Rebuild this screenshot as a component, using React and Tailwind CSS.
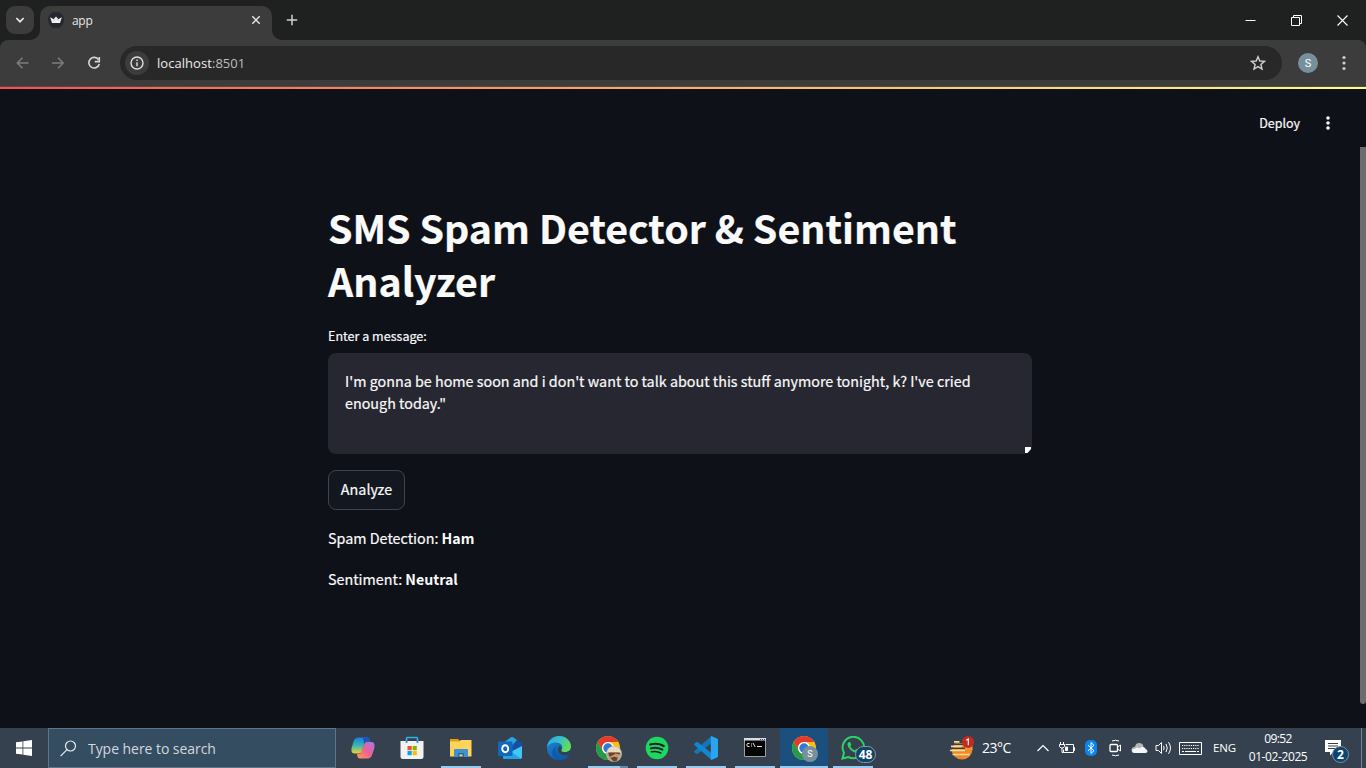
import React from "react";

const SANS = "font-['Noto_Sans_CJK_JP',sans-serif]";
const UI = "font-['Open_Sans','Noto_Sans',sans-serif]";

function CrownIcon() {
  return (
    <svg width="16" height="16" viewBox="0 0 16 16">
      <circle cx="8" cy="8" r="8" fill="#262730" />
      <path d="M2.2 5.2 5.6 7.2 8 4.6 10.4 7.2 13.8 5.2 12 11H4z" fill="#f4f4f4" />
      <path d="M4.5 8.4 8 7.4l3.5 1" stroke="#b9bac0" strokeWidth=".6" fill="none" />
    </svg>
  );
}

function TabStrip() {
  return (
    <div className="flex h-10 shrink-0 bg-[#1f2120]">
      <div className="flex w-[34px] shrink-0 items-start pt-[6px] pl-[6px]">
        <div className="flex h-7 w-7 shrink-0 items-center justify-center rounded-[9px] bg-[#3c3c3c]">
          <svg width="10" height="8" viewBox="0 0 10 8">
            <path d="M1.3 2 5 5.7 8.7 2" stroke="#e6e6e6" strokeWidth="1.7" fill="none" />
          </svg>
        </div>
      </div>
      <div className="flex w-[6px] items-end">
        <svg className="-ml-[4px] shrink-0" width="10" height="10" viewBox="0 0 10 10">
          <path d="M10 0v10H0A10 10 0 0 0 10 0z" fill="#3c3c3c" />
        </svg>
      </div>
      <div className="mt-[6px] flex h-[34px] w-[232px] items-center rounded-t-[10px] bg-[#3c3c3c] pr-[11px] pb-[6px] pl-2">
        <CrownIcon />
        <span className={`${UI} ml-2 flex-1 pt-[2px] text-[12px] leading-4 tracking-[-0.3px] text-[#e8e8e8]`}>app</span>
        <svg width="10" height="10" viewBox="0 0 10 10">
          <path d="m1.3 1.3 7.4 7.4M8.7 1.3 1.3 8.7" stroke="#e3e3e3" strokeWidth="1.5" />
        </svg>
      </div>
      <div className="flex w-[14px] items-end">
        <svg width="10" height="10" viewBox="0 0 10 10">
          <path d="M0 0v10h10A10 10 0 0 1 0 0z" fill="#3c3c3c" />
        </svg>
      </div>
      <svg className="mt-[14px]" width="12" height="12" viewBox="0 0 12 12">
        <path d="M6 .8v10.4M.8 6h10.4" stroke="#cfcfcf" strokeWidth="1.5" />
      </svg>
      <div className="flex-1" />
      <div className="flex items-center gap-[35px] pr-[18px]">
        <svg width="11" height="11" viewBox="0 0 11 11">
          <path d="M.5 5.5h10" stroke="#fff" />
        </svg>
        <svg width="11" height="11" viewBox="0 0 11 11" fill="none" stroke="#fff">
          <path d="M.5 2.5h8v8h-8zM2.5 2.5v-2h8v8h-2" />
        </svg>
        <svg width="11" height="11" viewBox="0 0 11 11">
          <path d="m.5.5 10 10M10.5.5l-10 10" stroke="#fff" strokeWidth="1.1" />
        </svg>
      </div>
    </div>
  );
}

function Toolbar() {
  return (
    <div className="shrink-0 bg-[#1f2120]">
      <div className="flex h-[47px] items-start rounded-t-[8px] border-b border-[#4b4b4b] bg-[#3c3c3c] pt-[6px]">
        <div className="flex h-[34px] w-[120px] shrink-0 items-center gap-[23px] pl-[16px]">
          <svg width="13" height="12" viewBox="0 0 13 12" fill="none" stroke="#7d7d7d" strokeWidth="1.5">
            <path d="M12.500 6H1.500M6.500.8 1.300 6l5.200 5.200" />
          </svg>
          <svg width="13" height="12" viewBox="0 0 13 12" fill="none" stroke="#7d7d7d" strokeWidth="1.5">
            <path d="M0 6h11M6 .8 11.2 6 6 11.2" />
          </svg>
          <svg className="-ml-px" width="14" height="14" viewBox="0 0 14 14" fill="none" stroke="#d6d6d6" strokeWidth="1.6">
            <path d="M11.6 3.8A5.3 5.3 0 1 0 12.3 8" />
            <path d="M12.3 1v4.6H7.8" />
          </svg>
        </div>
        <div className="flex h-[34px] w-[1162px] shrink-0 items-center rounded-full bg-[#282828] pr-[16px] pl-[5px]">
          <div className="flex h-6 w-6 items-center justify-center rounded-full bg-[#3c3c3c]">
            <svg width="14" height="14" viewBox="0 0 14 14">
              <circle cx="7" cy="7" r="6" fill="none" stroke="#dedede" strokeWidth="1.4" />
              <path d="M7 6.2v4M7 3.5v1.4" stroke="#dedede" strokeWidth="1.4" />
            </svg>
          </div>
          <span className={`${UI} ml-2 flex-1 text-[13px] leading-5 tracking-[0.05px] text-[#bdbdbd]`}>
            <span className="text-[#ececec]">localhost</span>:8501
          </span>
          <svg width="16" height="16" viewBox="0 0 16 16">
            <path d="m8 1.7 1.8 4.3 4.7.4-3.6 3.1 1.1 4.6L8 11.6l-4 2.5 1.1-4.6L1.5 6.4l4.7-.4z" fill="none" stroke="#cfcfcf" strokeWidth="1.4" />
          </svg>
        </div>
        <div className="flex h-[34px] flex-1 items-center pl-4">
          <div className="flex h-5 w-5 items-center justify-center rounded-full bg-[#78909c] font-['Roboto',sans-serif] text-[11px] leading-none text-white">S</div>
          <svg className="ml-[24px]" width="4" height="16" viewBox="0 0 4 16" fill="#cfcfcf">
            <circle cx="2" cy="2.5" r="1.6" />
            <circle cx="2" cy="8" r="1.6" />
            <circle cx="2" cy="13.5" r="1.6" />
          </svg>
        </div>
      </div>
      <div className="h-[2px] bg-linear-to-r from-[#ff4b4b] to-[#fffd80]" />
    </div>
  );
}

function StreamlitPage() {
  return (
    <div className={`${SANS} flex min-h-0 flex-1 flex-col bg-[#0e1117] text-[#fafafa] [-webkit-text-stroke:0.2px]`}>
      <header className="flex h-[58px] shrink-0 items-center justify-end pt-[10px] pr-[36px]">
        <span className="text-[12.5px] leading-5">Deploy</span>
        <svg className="ml-[26px]" width="4" height="14" viewBox="0 0 4 14" fill="#fafafa">
          <circle cx="2" cy="2" r="1.8" />
          <circle cx="2" cy="7" r="1.8" />
          <circle cx="2" cy="12" r="1.8" />
        </svg>
      </header>
      <div className="flex min-h-0 flex-1">
        <main className="ml-[328px] w-[704px] pt-[53px]">
          <h1 className="text-[39.34px] leading-[53px] font-bold">
            SMS Spam Detector &amp; Sentiment Analyzer
          </h1>
          <p className="mt-[20px] text-[12.55px] leading-[20px]">Enter a message:</p>
          <div className="mt-[7px] flex h-[101px] rounded-lg bg-[#262730] pt-[17px] pl-[17px]">
            <p className="mr-[10px] flex-1 text-[14.33px] leading-[22.4px]">
              I'm gonna be home soon and i don't want to talk about this stuff anymore tonight, k? I've cried enough today."
            </p>
            <svg className="mr-[1px] mb-[1px] shrink-0 self-end" width="6" height="6" viewBox="0 0 6 6">
              <path d="M0 0h6v2L2.500 6H0z" fill="#fff" />
            </svg>
          </div>
          <button className="mt-4 flex h-10 w-[77px] items-center justify-center rounded-lg border border-[#41444c] bg-[#131720] pb-[2px] text-[14.33px] leading-6">
            Analyze
          </button>
          <p className="mt-[15px] text-[14.33px] leading-[26px]">
            Spam Detection: <b className="text-[14.2px] font-bold [-webkit-text-stroke:0px]">Ham</b>
          </p>
          <p className="mt-[15px] text-[14.33px] leading-[26px]">
            Sentiment: <b className="text-[14.2px] font-bold [-webkit-text-stroke:0px]">Neutral</b>
          </p>
        </main>
        <div className="ml-auto h-[557px] w-[6px] rounded-b-[3px] bg-[#6b6c70]" />
      </div>
    </div>
  );
}

function Copilot() {
  return (
    <svg width="24" height="24" viewBox="0 0 24 24">
      <defs>
        <linearGradient id="cpa" x1="0" y1="0" x2="0" y2="1">
          <stop offset="0" stopColor="#1b7fe0" />
          <stop offset=".5" stopColor="#37b8b0" />
          <stop offset="1" stopColor="#f5cf2c" />
        </linearGradient>
        <linearGradient id="cpb" x1="1" y1="0" x2="0" y2="1">
          <stop offset="0" stopColor="#a779ee" />
          <stop offset=".5" stopColor="#ee6092" />
          <stop offset="1" stopColor="#ff9d55" />
        </linearGradient>
      </defs>
      <path d="M7.500 1.500h8.500c2 0 2.600 2 3.200 4h-3c-2 0-2.500 1-3 3l-2 6c-.6 2-1.500 3-3.500 3H3.500c-3 0-3.500-3-2.800-6l2-6.500C3.500 3 5 1.500 7.500 1.500z" fill="url(#cpa)" />
      <path d="M16.500 22.500H9c-2 0-2.500-1.500-3-4.500h1.500c2 0 2.800-1.200 3.300-3l2-6c.6-2 1.500-3 3.500-3H20.500c3 0 3.500 3 2.800 6l-2 6.500c-.8 2.700-2.300 4-4.800 4z" fill="url(#cpb)" />
      <path d="M12 1.500h4c2 0 2.600 2 3.200 4h-3c-2 0-2.500 1-3 3z" fill="#1854c7" />
    </svg>
  );
}

function Store() {
  return (
    <svg width="24" height="24" viewBox="0 0 24 24">
      <path d="M6.500 6V2.500q0-1 1-1h9q1 0 1 1V6" fill="none" stroke="#2fb0e6" strokeWidth="1.700" />
      <path d="M.5 5h23v15.500q0 2.500-2.500 2.500H3Q.5 23 .5 20.500z" fill="#f2f2f2" />
      <path d="M5.700 5h1.700v1.700H5.700zm10.900 0h1.700v1.700h-1.700z" fill="#1476b8" />
      <path d="M7.500 10h4.200v4.200H7.500z" fill="#f25022" />
      <path d="M12.600 10h4.200v4.200h-4.200z" fill="#7fba00" />
      <path d="M7.500 15h4.200v4.200H7.500z" fill="#00a4ef" />
      <path d="M12.600 15h4.200v4.200h-4.200z" fill="#ffb900" />
    </svg>
  );
}

function Explorer() {
  return (
    <svg width="24" height="24" viewBox="0 0 24 24">
      <path d="M1 3h8l2 2h11v4H1z" fill="#e0a008" />
      <path d="M1 5.500h9L12 4h10.500v16.500H1z" fill="#ffd35c" />
      <path d="M5 21v-7q0-1 1-1h12q1 0 1 1v7h-4v-4H9v4z" fill="#3f92d2" />
      <path d="M9 17h6v4h-1.500v-2.500h-3V21H9z" fill="#1d6eb0" />
    </svg>
  );
}

function Outlook() {
  return (
    <svg width="24" height="24" viewBox="0 0 24 24">
      <path d="M3 8.500 13 1.200q1-.6 2 0L24 7.500V21q0 2-2 2H7q-2 0-2-2z" fill="#1668b8" />
      <path d="M3 8.500 13 1.200q1-.6 2 0l4 2.800-7 7z" fill="#2aa5e2" />
      <path d="m11 16 8-12 5 3.500V10l-8 7z" fill="#1750a2" />
      <path d="m5 20 19-10v11q0 2-2 2H7q-2 0-2-2z" fill="#3ec8f3" />
      <path d="m5 20 9-3.500 9 6-1 .5H7q-2 0-2-2z" fill="#24a4e3" />
      <rect x="0" y="5.500" width="14.500" height="14.500" rx="1" fill="#0f68be" />
      <ellipse cx="7.200" cy="12.700" rx="3" ry="3.500" fill="none" stroke="#fff" strokeWidth="1.900" />
    </svg>
  );
}

function Edge() {
  return (
    <svg width="24" height="24" viewBox="0 0 24 24">
      <defs>
        <linearGradient id="eda" x1="0" y1="0" x2="1" y2=".4">
          <stop offset="0" stopColor="#2da5dc" />
          <stop offset=".5" stopColor="#35bdd0" />
          <stop offset="1" stopColor="#62dd58" />
        </linearGradient>
        <linearGradient id="edb" x1="0" y1="0" x2="1" y2="1">
          <stop offset="0" stopColor="#1e8bd8" />
          <stop offset="1" stopColor="#0b4a96" />
        </linearGradient>
      </defs>
      <circle cx="12" cy="12" r="12" fill="url(#edb)" />
      <path d="M0 11C1 4 6 0 12 0c7 0 12 5 12 10.300 0 3.700-2.700 6-6 6-3 0-4.500-1.300-3.700-2.300C17 10.500 14 6.500 9 6.500c-4 0-7.500 2-9 4.500z" fill="url(#eda)" />
      <path d="M9.500 10.500C7 14.500 10 21 16 21c3 0 5-1 6.200-2C19 24.500 12 25.500 7.500 22 3.500 18.500 5 12 9.500 10.500z" fill="#0d5bb0" />
      <path d="M14.300 14c-.8 1 .7 2.300 3.700 2.300 1.800 0 3.500-.6 4.700-1.700l.7 1.900c-2.900 3-8.400 3.500-11.400.7C10 15 10.500 11.500 12.700 10c1.800.8 2.500 2.700 1.600 4z" fill="#34404e" />
    </svg>
  );
}

function Chrome({ badge }) {
  return (
    <div className="relative h-6 w-6">
      <svg width="24" height="24" viewBox="0 0 24 24">
        <circle cx="12" cy="12" r="12" fill="#fbc116" />
        <path d="M1.610 6A12 12 0 0 1 22.390 6H12a6 6 0 0 0-5.200 9z" fill="#e33b2e" />
        <path d="M1.610 6A12 12 0 0 0 12 24l5.200-9A6 6 0 0 1 6.800 15z" fill="#219b4c" />
        <circle cx="12" cy="12" r="6" fill="#fff" />
        <circle cx="12" cy="12" r="4.700" fill="#3278dc" />
      </svg>
      {badge === "S" ? (
        <span className="absolute top-[10px] left-[10px] flex h-[16px] w-[16px] items-center justify-center rounded-full bg-[#78909c] font-['Roboto',sans-serif] text-[9px] leading-none text-white">S</span>
      ) : (
        <svg className="absolute top-[10px] left-[10px]" width="16" height="16" viewBox="0 0 15 15">
          <circle cx="7.500" cy="7.500" r="7.500" fill="#b8aa94" />
          <path d="M1 6Q2 .5 7.500.5T14 6l-2 1H3z" fill="#e7dcc0" />
          <path d="M3 6h9l-.5 6L8 14l-4.500-2z" fill="#c99472" />
          <path d="M2 6h11v2l-4-1-3 2-3 1zM4 11l4-1 3 1-1 3-3 .5z" fill="#68442f" />
        </svg>
      )}
    </div>
  );
}

function Spotify() {
  return (
    <svg width="24" height="24" viewBox="0 0 24 24">
      <circle cx="12" cy="12" r="11.300" fill="#1ed760" />
      <g fill="none" stroke="#17212a" strokeLinecap="round">
        <path d="M5.200 8.500c4.500-1.300 9.500-.8 13.500 1.500" strokeWidth="2.200" />
        <path d="M5.800 12.300c4-1.100 8-.6 11.600 1.400" strokeWidth="1.900" />
        <path d="M6.400 15.800c3.500-.8 6.600-.4 9.500 1.200" strokeWidth="1.500" />
      </g>
    </svg>
  );
}

function VSCode() {
  return (
    <svg width="24" height="24" viewBox="0 0 24 24">
      <path d="M17.500 0v7L3.500 18 1.700 17.600.4 16.300q-.6-.8.2-1.500z" fill="#1177bb" />
      <path d="M17.500 24v-7L3.500 6 1.700 6.400.4 7.700q-.6.800.2 1.500z" fill="#1287ce" />
      <path d="M17.500 0 23 2.500q1 .5 1 1.500v16q0 1-1 1.500L17.500 24q-.7-.3-.7-1.300V1.300q0-1 .7-1.300z" fill="#29a4ee" />
    </svg>
  );
}

function Cmd() {
  return (
    <svg className="-ml-px" width="24" height="24" viewBox="0 0 24 24">
      <path d="M1.500 2.500h21v18h-21z" fill="#050505" stroke="#9aa0a5" />
      <path d="M1 2h22v2.500H1z" fill="#d9dde0" />
      <path d="M17 3h1v1h-1zm2 0h1v1h-1zm2 0h1v1h-1z" fill="#41464c" />
      <path d="M6.500 7.500h-2L4 8v2l.5.500h2M8.500 7.500v1M8.500 9.500v1M10 7l2.200 4M14 10.500h5" fill="none" stroke="#e8e8e8" />
    </svg>
  );
}

function WhatsApp() {
  return (
    <div className="relative h-6 w-6">
      <svg width="24" height="24" viewBox="0 0 24 24">
        <path d="M1.500 22.500 3 16.800A10.700 10.700 0 1 1 7.300 21z" fill="none" stroke="#2bd366" strokeWidth="2" />
        <path d="M7.600 6.300c.8-.6 1.500-.3 1.800.3l.8 2c.2.600-.8 1.500-.8 1.800.8 1.800 2.500 3.200 4.200 3.900.6 0 1.200-1.500 1.800-1.400l2 1c.8.400.5 1.800-.3 2.400-3.500 2.500-11.500-4.500-10.500-8.500.1-.6.500-1.100 1-1.500z" fill="#2bd366" />
      </svg>
      <span className={`${UI} absolute top-[10px] left-[14px] flex h-[17px] w-[21px] items-center justify-center rounded-full border border-[#8299a9] bg-[#104468] text-[12px] leading-none font-bold tracking-[-0.2px] text-white`}>48</span>
    </div>
  );
}

const APPS = [
  { icon: <Copilot /> },
  { icon: <Store /> },
  { icon: <Explorer />, line: true },
  { icon: <Outlook /> },
  { icon: <Edge /> },
  { icon: <Chrome badge="photo" />, line: true, stacked: true },
  { icon: <Spotify />, line: true },
  { icon: <VSCode />, line: true },
  { icon: <Cmd />, line: true },
  { icon: <Chrome badge="S" />, active: true },
  { icon: <WhatsApp />, line: true },
];

function TaskButton({ icon, line, active, stacked }) {
  return (
    <div className={`flex h-10 w-12 shrink-0 flex-col items-center ${active ? "bg-[#1b4f7e]" : ""}`}>
      <div className="flex h-[38px] items-center pt-[2px]">{icon}</div>
      <div className={`flex h-[2px] ${active ? "w-12" : "w-10"} ${line || active ? "bg-[#98c9ee]" : ""}`}>
        {stacked && <div className="ml-auto w-[8px] bg-[#6889a5]" />}
      </div>
    </div>
  );
}

function Tray() {
  return (
    <div className={`${UI} ml-auto flex h-10 items-center text-white`}>
      <svg width="26" height="26" viewBox="0 0 26 26">
        <path d="M2.500 14h21a10.500 10.500 0 0 1-21 0z" fill="#f0882a" />
        <path d="M6 8h17.500v7H3z" fill="#f39a35" />
        <path d="M4 9.300h11M1 13.200h15" stroke="#35414e" strokeWidth="1.600" />
        <path d="M5 6.800h5.500M2 11.300h10.500M1 15.500h15M3.500 19.500h17" stroke="#f9dc95" strokeWidth="1.700" />
        <circle cx="19" cy="7" r="6" fill="#c42b1c" />
        <path d="m17.300 5.300 2-1.300v6.300" stroke="#fff" strokeWidth="1.100" fill="none" />
      </svg>
      <span className="ml-[7px] w-[30px] text-[14px] leading-5 tracking-[-0.5px]">23°C</span>
      <svg className="ml-[24px]" width="14" height="8" viewBox="0 0 14 8">
        <path d="m1.500 7 5.500-5.500L12.500 7" stroke="#fff" strokeWidth="1.200" fill="none" />
      </svg>
      <svg className="ml-[8px]" width="18" height="16" viewBox="0 0 18 16" fill="none" stroke="#fff">
        <path d="M7.500 4.500h8v8h-10v-3M15.500 7.500h1v3h-1M2.500 2v2M5.500 2v2M1.500 4.500h5v2l-1.500 1.500h-2L1.500 6.500zM4 8v4.500h1.500" />
        <path d="M7.500 7h2v3.500h-2z" fill="#fff" />
      </svg>
      <svg className="ml-[9px]" width="12" height="16" viewBox="0 0 12 16">
        <rect width="12" height="16" rx="5" fill="#0a84ef" />
        <path d="m3 5.200 6 5.500-3 2.800v-11l3 2.800-6 5.500" stroke="#fff" fill="none" />
      </svg>
      <svg className="ml-[12px]" width="13" height="18" viewBox="0 0 13 18" fill="none" stroke="#fff">
        <path d="M3 2q3.500-1.500 7 0M3 16q3.500 1.500 7 0" />
        <rect x="1" y="5.500" width="7.500" height="7" rx="1" strokeWidth="1.300" />
        <path d="m8.500 8 3-2v6l-3-2" />
      </svg>
      <svg className="ml-[9px]" width="17" height="12" viewBox="0 0 17 12">
        <path d="M4 11Q.5 11 .5 8T4 4.800Q4.500 1 8 1t4.500 3.300L6 11z" fill="#b1b6ba" />
        <path d="M4 11q-3 0-3-2.200T4 6.700q2-2.200 4.800-.2 1.400-2.500 4.200-1.300 1.800.8 1.700 2 1.800.3 1.800 2T14.500 11z" fill="#f6f6f6" />
      </svg>
      <svg className="ml-[7px]" width="17" height="14" viewBox="0 0 17 14" fill="none" stroke="#fff">
        <path d="M1 4.500h2.500L6.500 1.500v11l-3-3H1z" />
        <path d="M8.500 4.800q1.300 2.200 0 4.400M11 3q2.500 4 0 8M13.500 1.200q4 5.800 0 11.600" />
      </svg>
      <svg className="ml-[7px]" width="23" height="13" viewBox="0 0 23 13" fill="none" stroke="#fff">
        <path d="M.5.500h22v12H.5z" />
        <path d="M3 3.500h17M3 6.500h17" strokeDasharray="1.200 1" />
        <path d="M3 9.500h2M6 9.500h11M18 9.500h2" />
      </svg>
      <span className="ml-[11px] w-[24px] text-[11.5px] leading-4 tracking-[-0.2px]">ENG</span>
      <div className="ml-[11px] flex w-[60px] flex-col items-center text-[12px] leading-[18px] tracking-[-0.4px] whitespace-nowrap">
        <span className="tracking-[-0.6px]">09:52</span>
        <span>01-02-2025</span>
      </div>
      <div className="relative ml-[16px] mt-[6px] h-6 w-[26px]">
        <svg width="18" height="18" viewBox="0 0 18 18">
          <path d="M1 1h16v12H9.500L6 16.500V13H1z" fill="#fff" />
          <path d="M4 4.500h10M4 7h10M4 9.500h7" stroke="#34414d" />
        </svg>
        <span className="absolute top-[7px] left-[8px] flex h-[17px] w-[17px] items-center justify-center rounded-full border border-[#7891a3] bg-[#0d4570] text-[12px] leading-none font-bold">2</span>
      </div>
      <div className="ml-[11px] h-10 w-px bg-[#77818a]" />
      <div className="w-[4px]" />
    </div>
  );
}

function Taskbar() {
  return (
    <div className="flex h-10 shrink-0 bg-[#35414e]">
      <div className="flex w-12 shrink-0 items-center justify-center">
        <svg width="16" height="16" viewBox="0 0 16 16" fill="#fff">
          <path d="M0 2.300 6.500 1.400v6.200H0zM7.300 1.300 16 0v7.600H7.300zM0 8.400h6.500v6.200L0 13.700zM7.300 8.400H16V16l-8.700-1.300z" />
        </svg>
      </div>
      <div className="flex h-10 w-[288px] shrink-0 items-center border border-[#5f7486] bg-[#354d61] pl-[11px]">
        <svg width="17" height="17" viewBox="0 0 17 17" fill="none" stroke="#e8ebee" strokeWidth="1.200">
          <circle cx="10.500" cy="6" r="5" />
          <path d="M7 9.700.6 16.200" />
        </svg>
        <span className={`${UI} ml-[11px] pt-[2px] text-[14px] leading-5 tracking-[-0.05px] text-[#d2d8dd]`}>Type here to search</span>
      </div>
      <div className="ml-[3px] flex gap-px">
        {APPS.map((app, i) => (
          <TaskButton key={i} {...app} />
        ))}
      </div>
      <Tray />
    </div>
  );
}

export default function App() {
  return (
    <div className="flex h-[768px] w-[1366px] flex-col overflow-hidden">
      <TabStrip />
      <Toolbar />
      <StreamlitPage />
      <Taskbar />
    </div>
  );
}
